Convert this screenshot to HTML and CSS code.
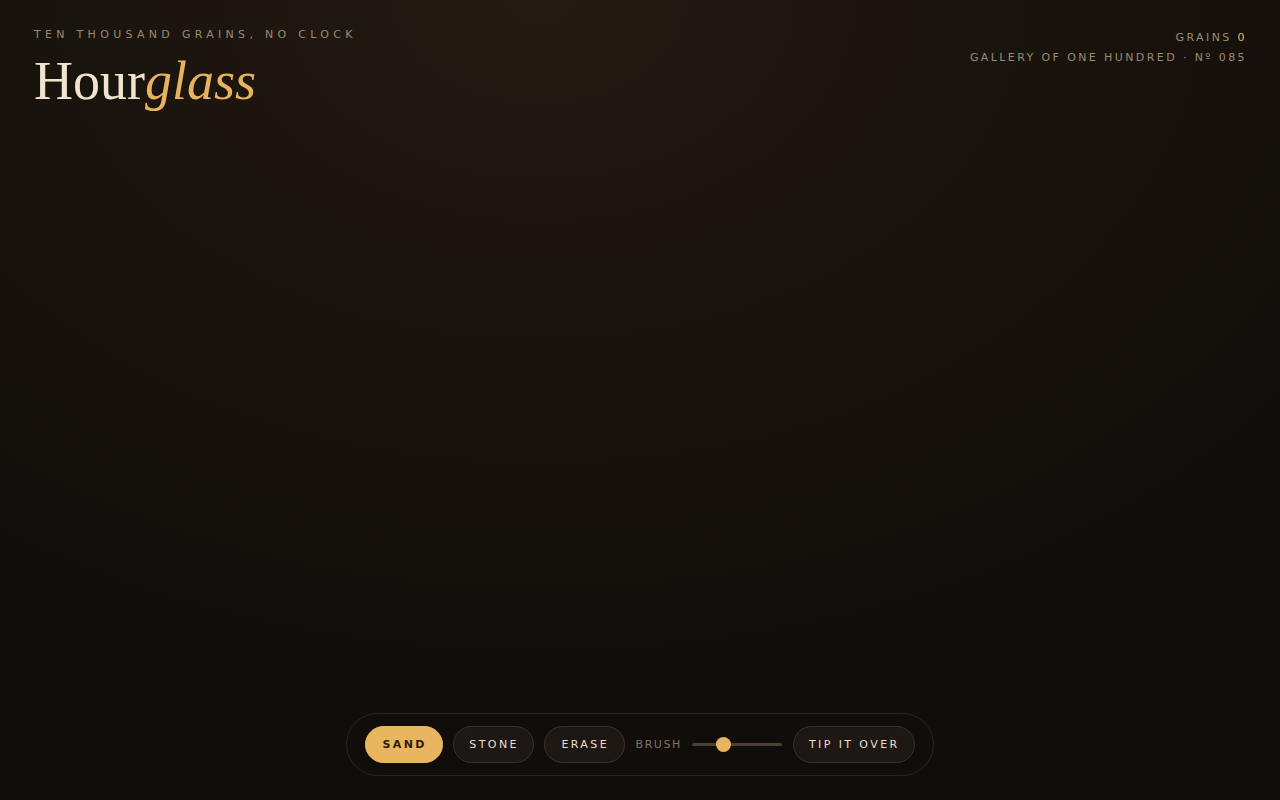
FILE: index.html
```
<!DOCTYPE html>
<html lang="en">
<head>
<meta charset="utf-8">
<title>Hourglass</title>
<link rel="stylesheet" href="styles.css">
</head>
<body>
<div class="page">
  <header class="top">
    <div class="brand">
      <div class="kicker">TEN THOUSAND GRAINS, NO CLOCK</div>
      <h1 class="title">Hour<em>glass</em></h1>
    </div>
    <div class="meta">
      <div class="grains">GRAINS <span class="count">0</span></div>
      <div class="gallery">GALLERY OF ONE HUNDRED · Nº 085</div>
    </div>
  </header>
  <main class="stage"></main>
  <footer class="bar-wrap">
    <div class="toolbar">
      <button class="pill active">SAND</button>
      <button class="pill">STONE</button>
      <button class="pill wide">ERASE</button>
      <span class="brush">BRUSH</span>
      <div class="slider"><div class="track"></div><div class="thumb"></div></div>
      <button class="pill">TIP IT OVER</button>
    </div>
  </footer>
</div>
</body>
</html>
```
FILE: styles.css
```
* { box-sizing: border-box; }
html, body { margin: 0; height: 100%; }
body {
  background: radial-gradient(ellipse 1000px 700px at 540px 0px, #231a11 0%, #1a140e 45%, #110d0a 100%);
  background-color: #110d0a;
  font-family: "DejaVu Sans", sans-serif;
  color: #e9dcc4;
  overflow: hidden;
}
.page {
  height: 800px;
  display: flex;
  flex-direction: column;
}
.top {
  display: flex;
  justify-content: space-between;
  align-items: flex-start;
  padding: 28px 34px 0 34px;
}
.kicker {
  font-size: 11px;
  letter-spacing: 4.3px;
  color: #9a8a70;
  line-height: 13px;
}
.title {
  margin: 9px 0 0 0;
  font-family: "Liberation Serif", serif;
  font-weight: 400;
  font-size: 54px;
  line-height: 62px;
  color: #f0e4ce;
}
.title em {
  color: #e8b35c;
  font-style: italic;
}
.meta {
  text-align: right;
  font-size: 11px;
  letter-spacing: 2.4px;
  color: #9a8a70;
  padding-top: 3px;
  margin-right: -1px;
}
.grains { line-height: 13px; }
.count { color: #e8b35c; }
.gallery { margin-top: 7px; line-height: 13px; }
.stage { flex: 1; }
.bar-wrap {
  display: flex;
  justify-content: center;
  padding-bottom: 24px;
}
.toolbar {
  display: flex;
  align-items: center;
  gap: 10.5px;
  padding: 12px 18px 12px 18px;
  border: 1px solid #2d251d;
  border-radius: 32px;
  background: rgba(18, 14, 11, 0.6);
}
.pill {
  height: 37px;
  padding: 0 14px 0 15px;
  border-radius: 19px;
  border: 1px solid #3b322a;
  background: #1e1815;
  color: #eadfcd;
  font-family: "DejaVu Sans", sans-serif;
  font-size: 11px;
  letter-spacing: 2.4px;
  cursor: pointer;
}
.pill.wide {
  padding: 0 15px 0 16px;
}
.pill.active {
  background: #e9b65f;
  border-color: #e9b65f;
  color: #2a1a0c;
  font-weight: 700;
  padding: 0 15px 0 16px;
}
.brush {
  font-size: 11px;
  letter-spacing: 1.6px;
  color: #83735d;
}
.slider {
  position: relative;
  width: 90px;
  height: 15px;
  display: flex;
  align-items: center;
}
.track {
  width: 100%;
  height: 3px;
  border-radius: 2px;
  background: #4a4036;
}
.thumb {
  position: absolute;
  left: 24px;
  top: 0;
  width: 15px;
  height: 15px;
  border-radius: 50%;
  background: #e9b65f;
}
```
